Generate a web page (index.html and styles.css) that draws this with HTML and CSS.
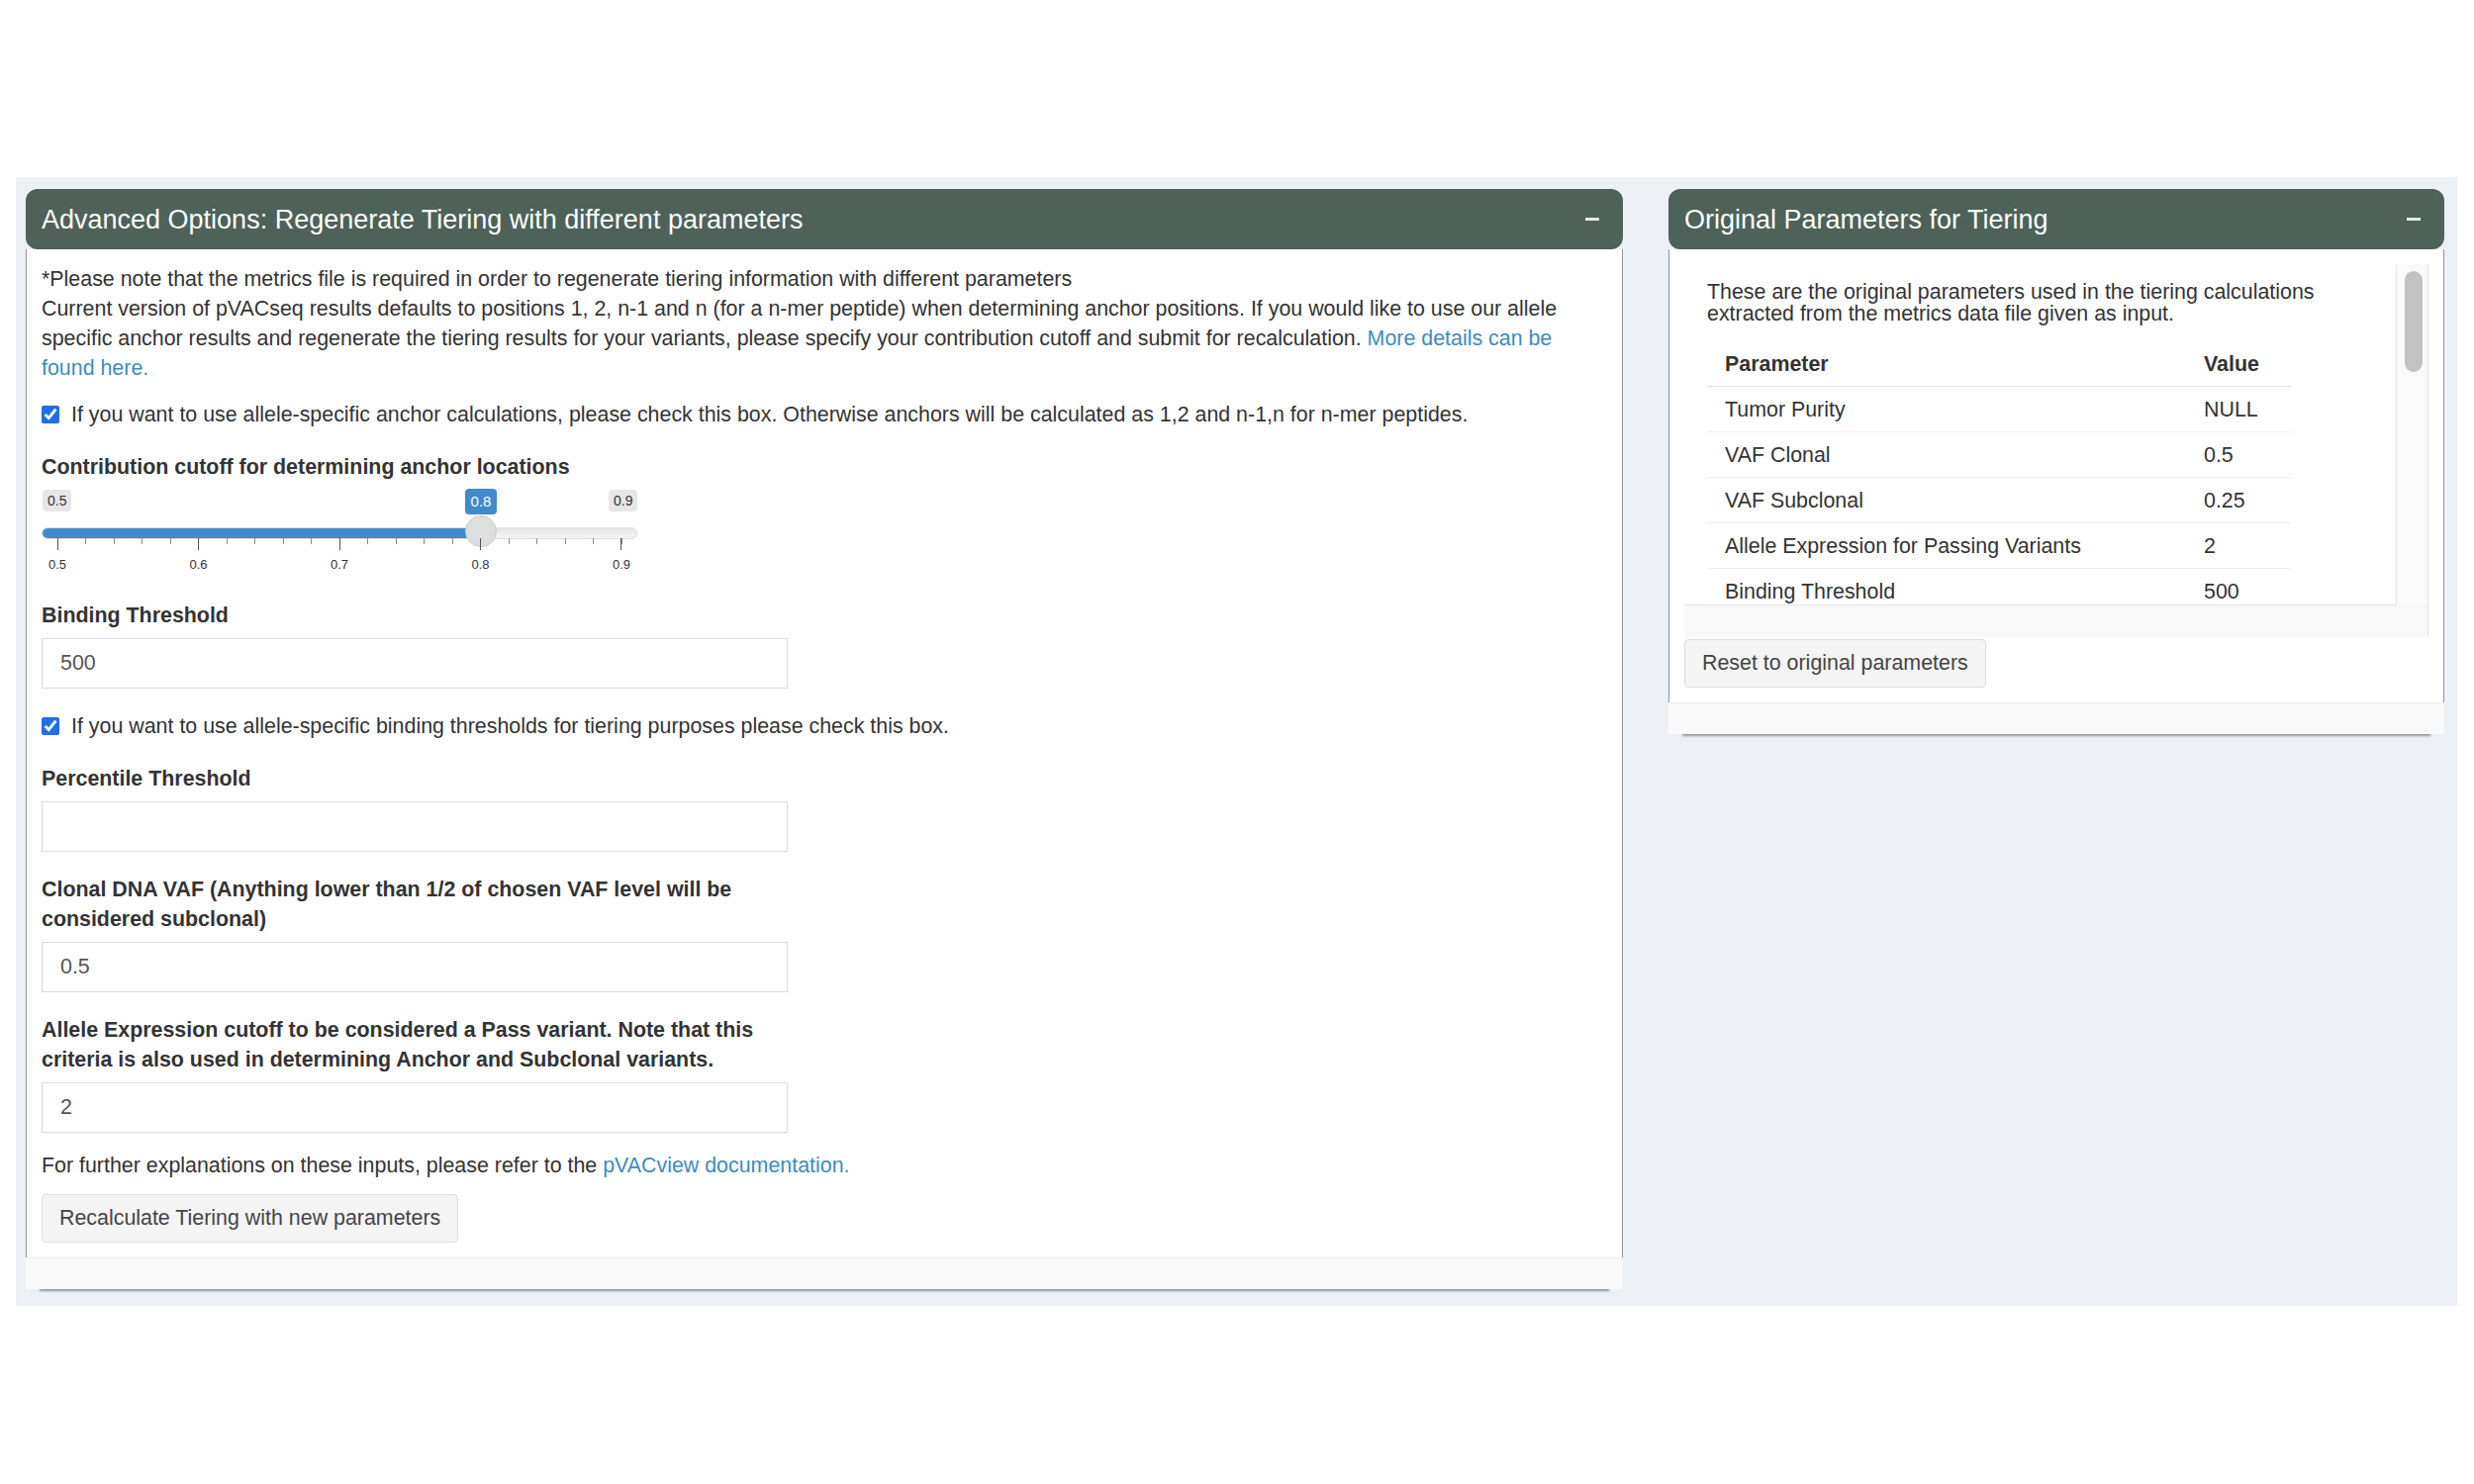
FILE: index.html
```html
<!DOCTYPE html>
<html>
<head>
  <title>pVACview - Tiering parameters</title>
  <link rel="stylesheet" href="styles.css">
</head>
<body>
  <div class="content-wrapper">
    <div class="row">

      <div class="box box-main">
        <div class="box-header">
          <h3 class="box-title">Advanced Options: Regenerate Tiering with different parameters</h3>
          <span class="box-tool"></span>
        </div>
        <div class="box-body">
          <p class="intro">*Please note that the metrics file is required in order to regenerate tiering information with different parameters<br>
            Current version of pVACseq results defaults to positions 1, 2, n-1 and n (for a n-mer peptide) when determining anchor positions. If you would like to use our allele specific anchor results and regenerate the tiering results for your variants, please specify your contribution cutoff and submit for recalculation. <a href="#">More details can be found here.</a></p>

          <label class="checkbox"><input type="checkbox" checked> If you want to use allele-specific anchor calculations, please check this box. Otherwise anchors will be calculated as 1,2 and n-1,n for n-mer peptides.</label>

          <div class="form-group">
            <label class="control-label">Contribution cutoff for determining anchor locations</label>
            <div class="irs">
              <span class="irs-min">0.5</span>
              <span class="irs-single">0.8</span>
              <span class="irs-max">0.9</span>
              <span class="irs-line"><span class="irs-bar"></span></span>
              <span class="irs-handle"></span>
              <span class="irs-ticks"></span>
              <div class="irs-grid">
                <span>0.5</span><span>0.6</span><span>0.7</span><span>0.8</span><span>0.9</span>
              </div>
            </div>
          </div>

          <div class="form-group">
            <label class="control-label">Binding Threshold</label>
            <input class="form-control" type="text" value="500">
          </div>

          <label class="checkbox"><input type="checkbox" checked> If you want to use allele-specific binding thresholds for tiering purposes please check this box.</label>

          <div class="form-group">
            <label class="control-label">Percentile Threshold</label>
            <input class="form-control" type="text" value="">
          </div>

          <div class="form-group">
            <label class="control-label">Clonal DNA VAF (Anything lower than 1/2 of chosen VAF level will be considered subclonal)</label>
            <input class="form-control" type="text" value="0.5">
          </div>

          <div class="form-group last">
            <label class="control-label">Allele Expression cutoff to be considered a Pass variant. Note that this criteria is also used in determining Anchor and Subclonal variants.</label>
            <input class="form-control" type="text" value="2">
          </div>

          <p class="help">For further explanations on these inputs, please refer to the <a href="#">pVACview documentation.</a></p>

          <button class="btn">Recalculate Tiering with new parameters</button>
        </div>
        <div class="box-footer"></div>
      </div>

      <div class="box box-side">
        <div class="box-header">
          <h3 class="box-title">Original Parameters for Tiering</h3>
          <span class="box-tool"></span>
        </div>
        <div class="box-body">
          <div class="orig-wrap">
            <div class="orig-scroll">
              <div class="orig-inner">
                <p class="orig-note">These are the original parameters used in the tiering calculations extracted from the metrics data file given as input.</p>
                <table class="param-table">
                  <thead>
                    <tr><th>Parameter</th><th>Value</th></tr>
                  </thead>
                  <tbody>
                    <tr><td>Tumor Purity</td><td>NULL</td></tr>
                    <tr><td>VAF Clonal</td><td>0.5</td></tr>
                    <tr><td>VAF Subclonal</td><td>0.25</td></tr>
                    <tr><td>Allele Expression for Passing Variants</td><td>2</td></tr>
                    <tr><td>Binding Threshold</td><td>500</td></tr>
                    <tr><td>Percentile Threshold</td><td>NULL</td></tr>
                  </tbody>
                </table>
              </div>
              <div class="scrollbar"><span class="thumb"></span></div>
            </div>
          </div>
          <button class="btn btn-reset">Reset to original parameters</button>
        </div>
        <div class="box-footer"></div>
      </div>

    </div>
  </div>
</body>
</html>
```

FILE: styles.css
```css
body {
  margin: 0;
  background: #ffffff;
  color: #333333;
  font-family: "Liberation Sans", Arial, sans-serif;
  font-size: 21.4px;
  line-height: 30px;
}

a {
  color: #3c8dbc;
  text-decoration: none;
}

.content-wrapper {
  box-sizing: border-box;
  width: 2467px;
  height: 1141px;
  margin: 179px 0 0 16px;
  padding: 12px 0 0 10px;
  background: #ecf0f5;
}

.row {
  display: flex;
  align-items: flex-start;
  gap: 46px;
}

/* boxes */
.box {
  border-radius: 12px 12px 0 0;
  box-shadow: 0 16px 2px -14px rgba(78, 98, 89, 0.6);
}
.box-main {
  width: 1614px;
}
.box-side {
  width: 784px;
}

.box-header {
  display: flex;
  align-items: center;
  justify-content: space-between;
  height: 61px;
  padding: 0 24px 0 16px;
  border-radius: 12px;
  background: #4e6259;
  color: #ffffff;
}
.box-title {
  margin: 0;
  font-size: 27px;
  font-weight: normal;
  line-height: 30px;
}
.box-tool {
  width: 14px;
  height: 3px;
  background: #e4e9e7;
}

.box-body {
  padding: 15px;
  border-left: 1px solid #8c9893;
  border-right: 1px solid #8c9893;
  background: #ffffff;
}
.box-footer {
  height: 31px;
  border-top: 1px solid #ececec;
  background: #f9f9f9;
}

/* form */
.intro {
  margin: 0 0 17px;
}

.checkbox {
  display: flex;
  align-items: center;
  gap: 12px;
  margin-bottom: 23px;
}
.checkbox input {
  width: 18px;
  height: 18px;
  margin: 0;
  accent-color: #1f6fe5;
}

.form-group {
  width: 754px;
  margin-bottom: 23px;
}
.form-group.last {
  margin-bottom: 18px;
}
.control-label {
  display: block;
  margin-bottom: 8px;
  font-weight: bold;
}
.form-control {
  box-sizing: border-box;
  display: block;
  width: 754px;
  height: 51px;
  padding: 0 18px;
  border: 1px solid #d9dce2;
  border-radius: 0;
  color: #555555;
  font-family: inherit;
  font-size: 21.4px;
}

.help {
  margin: 0 0 14px;
}

.btn {
  height: 49px;
  padding: 0 17px;
  border: 1px solid #dddddd;
  border-radius: 4px;
  background: #f4f4f4;
  color: #444444;
  font-family: inherit;
  font-size: 21.4px;
  white-space: nowrap;
}

/* range slider */
.irs {
  position: relative;
  width: 602px;
  height: 89px;
}
.irs-min,
.irs-max,
.irs-single {
  position: absolute;
  top: 0;
  height: 22px;
  padding: 0 5px;
  border-radius: 4px;
  background: #e6e6e6;
  color: #333333;
  font-size: 14px;
  line-height: 22px;
}
.irs-min {
  left: 1px;
}
.irs-max {
  left: 573px;
}
.irs-single {
  top: -1px;
  left: 428px;
  width: 22px;
  height: 26px;
  line-height: 26px;
  text-align: center;
  background: #428bca;
  color: #ffffff;
  font-size: 15px;
}
.irs-line {
  position: absolute;
  top: 38px;
  left: 0;
  width: 600px;
  height: 10px;
  border: 1px solid #dddddd;
  border-radius: 6px;
  background: linear-gradient(#e6e6e6, #f4f4f4);
  overflow: hidden;
}
.irs-bar {
  display: block;
  width: 446px;
  height: 100%;
  background: #428bca;
}
.irs-handle {
  position: absolute;
  top: 26px;
  left: 428px;
  box-sizing: border-box;
  width: 32px;
  height: 32px;
  border: 1px solid #cccccc;
  border-radius: 50%;
  background: #dedede;
}
.irs-ticks {
  position: absolute;
  top: 49px;
  left: 16px;
  width: 571px;
  height: 12px;
  background:
    repeating-linear-gradient(to right, #555555 0 1px, transparent 1px 142.375px) 0 0 / 100% 12px no-repeat,
    repeating-linear-gradient(to right, #8a8a8a 0 1px, transparent 1px 28.475px) 0 0 / 100% 6px no-repeat;
}
.irs-grid {
  position: absolute;
  top: 64px;
  left: -4px;
  display: flex;
  justify-content: space-between;
  width: 610px;
  color: #333333;
  font-size: 13px;
  line-height: 24px;
}
.irs-grid span {
  width: 40px;
  text-align: center;
}

/* original parameters */
.orig-wrap {
  height: 377px;
  border-right: 1px solid #e6e6e6;
  background: #f8f8f8;
}
.orig-scroll {
  display: flex;
  height: 345px;
}
.orig-inner {
  box-sizing: border-box;
  width: 720px;
  padding: 17px 23px 0 23px;
  border-right: 1px solid #e3e3e3;
  border-bottom: 1px solid #e3e3e3;
  background: #ffffff;
  overflow: hidden;
}
.orig-note {
  margin: 0 0 17px;
  line-height: 22px;
}
.scrollbar {
  flex: 1;
  background: #fafafa;
}
.scrollbar .thumb {
  display: block;
  width: 18px;
  height: 102px;
  margin: 7px 0 0 8px;
  border-radius: 9px;
  background: #c2c2c2;
}

.param-table {
  width: 590px;
  border-collapse: collapse;
}
.param-table th,
.param-table td {
  padding: 8px 18px 7px;
  text-align: left;
  line-height: 30px;
}
.param-table th:first-child,
.param-table td:first-child {
  width: 448px;
}
.param-table th {
  border-bottom: 1px solid #e2e2e2;
  font-weight: bold;
}
.param-table td {
  border-top: 1px solid #efefef;
}

.btn-reset {
  margin-top: 2px;
}
```
